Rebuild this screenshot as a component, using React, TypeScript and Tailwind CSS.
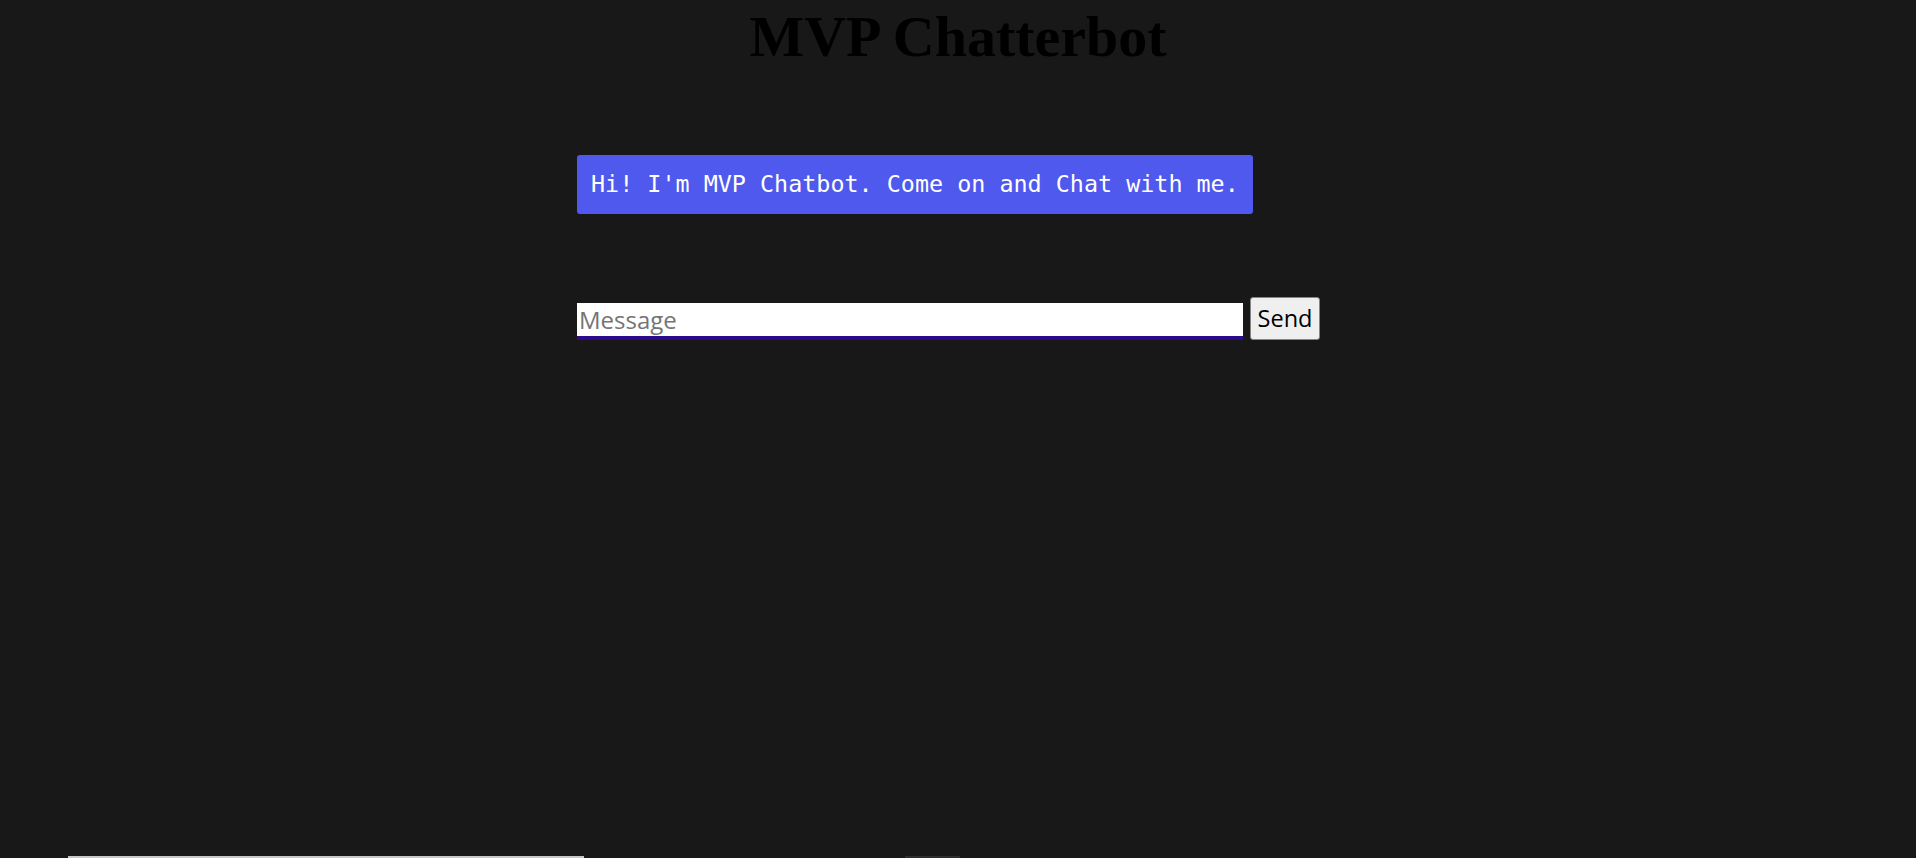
import { useState } from "react";

export default function App() {
  const [text, setText] = useState("");

  return (
    <div className="h-screen flex flex-col bg-[#181818] overflow-hidden">
      <h1 className="text-center pt-[5px] text-[58px] leading-[64px] font-bold text-black font-['Liberation_Serif',serif]">
        MVP Chatterbot
      </h1>

      <div className="w-[762px] mx-auto mt-[86px] flex flex-col items-start">
        <div className="rounded-[3px] bg-[#5059ee] px-[14px] py-[12px] text-white text-[23.4px] leading-[35px] font-['DejaVu_Sans_Mono',monospace]">
          Hi! I'm MVP Chatbot. Come on and Chat with me.
        </div>

        <form
          className="mt-[83px] flex items-end gap-[7px]"
          onSubmit={(e) => {
            e.preventDefault();
            setText("");
          }}
        >
          <input
            value={text}
            onChange={(e) => setText(e.target.value)}
            placeholder="Message"
            className="w-[666px] h-[37px] bg-white border-b-4 border-[#2c0a8c] px-[2px] text-[24px] text-black placeholder:text-[#757575] outline-none font-['Open_Sans',sans-serif]"
          />
          <button
            type="submit"
            className="w-[70px] h-[43px] rounded-[3px] border border-[#858585] bg-[#efefef] text-black text-[23.5px] leading-none font-['Open_Sans',sans-serif]"
          >
            Send
          </button>
        </form>
      </div>

      <div className="flex-1" />
      <div className="h-[2px] flex">
        <div className="ml-[68px] w-[516px] bg-[#c8c8c8]" />
        <div className="ml-[321px] w-[55px] bg-[#2e2e2e]" />
      </div>
    </div>
  );
}
